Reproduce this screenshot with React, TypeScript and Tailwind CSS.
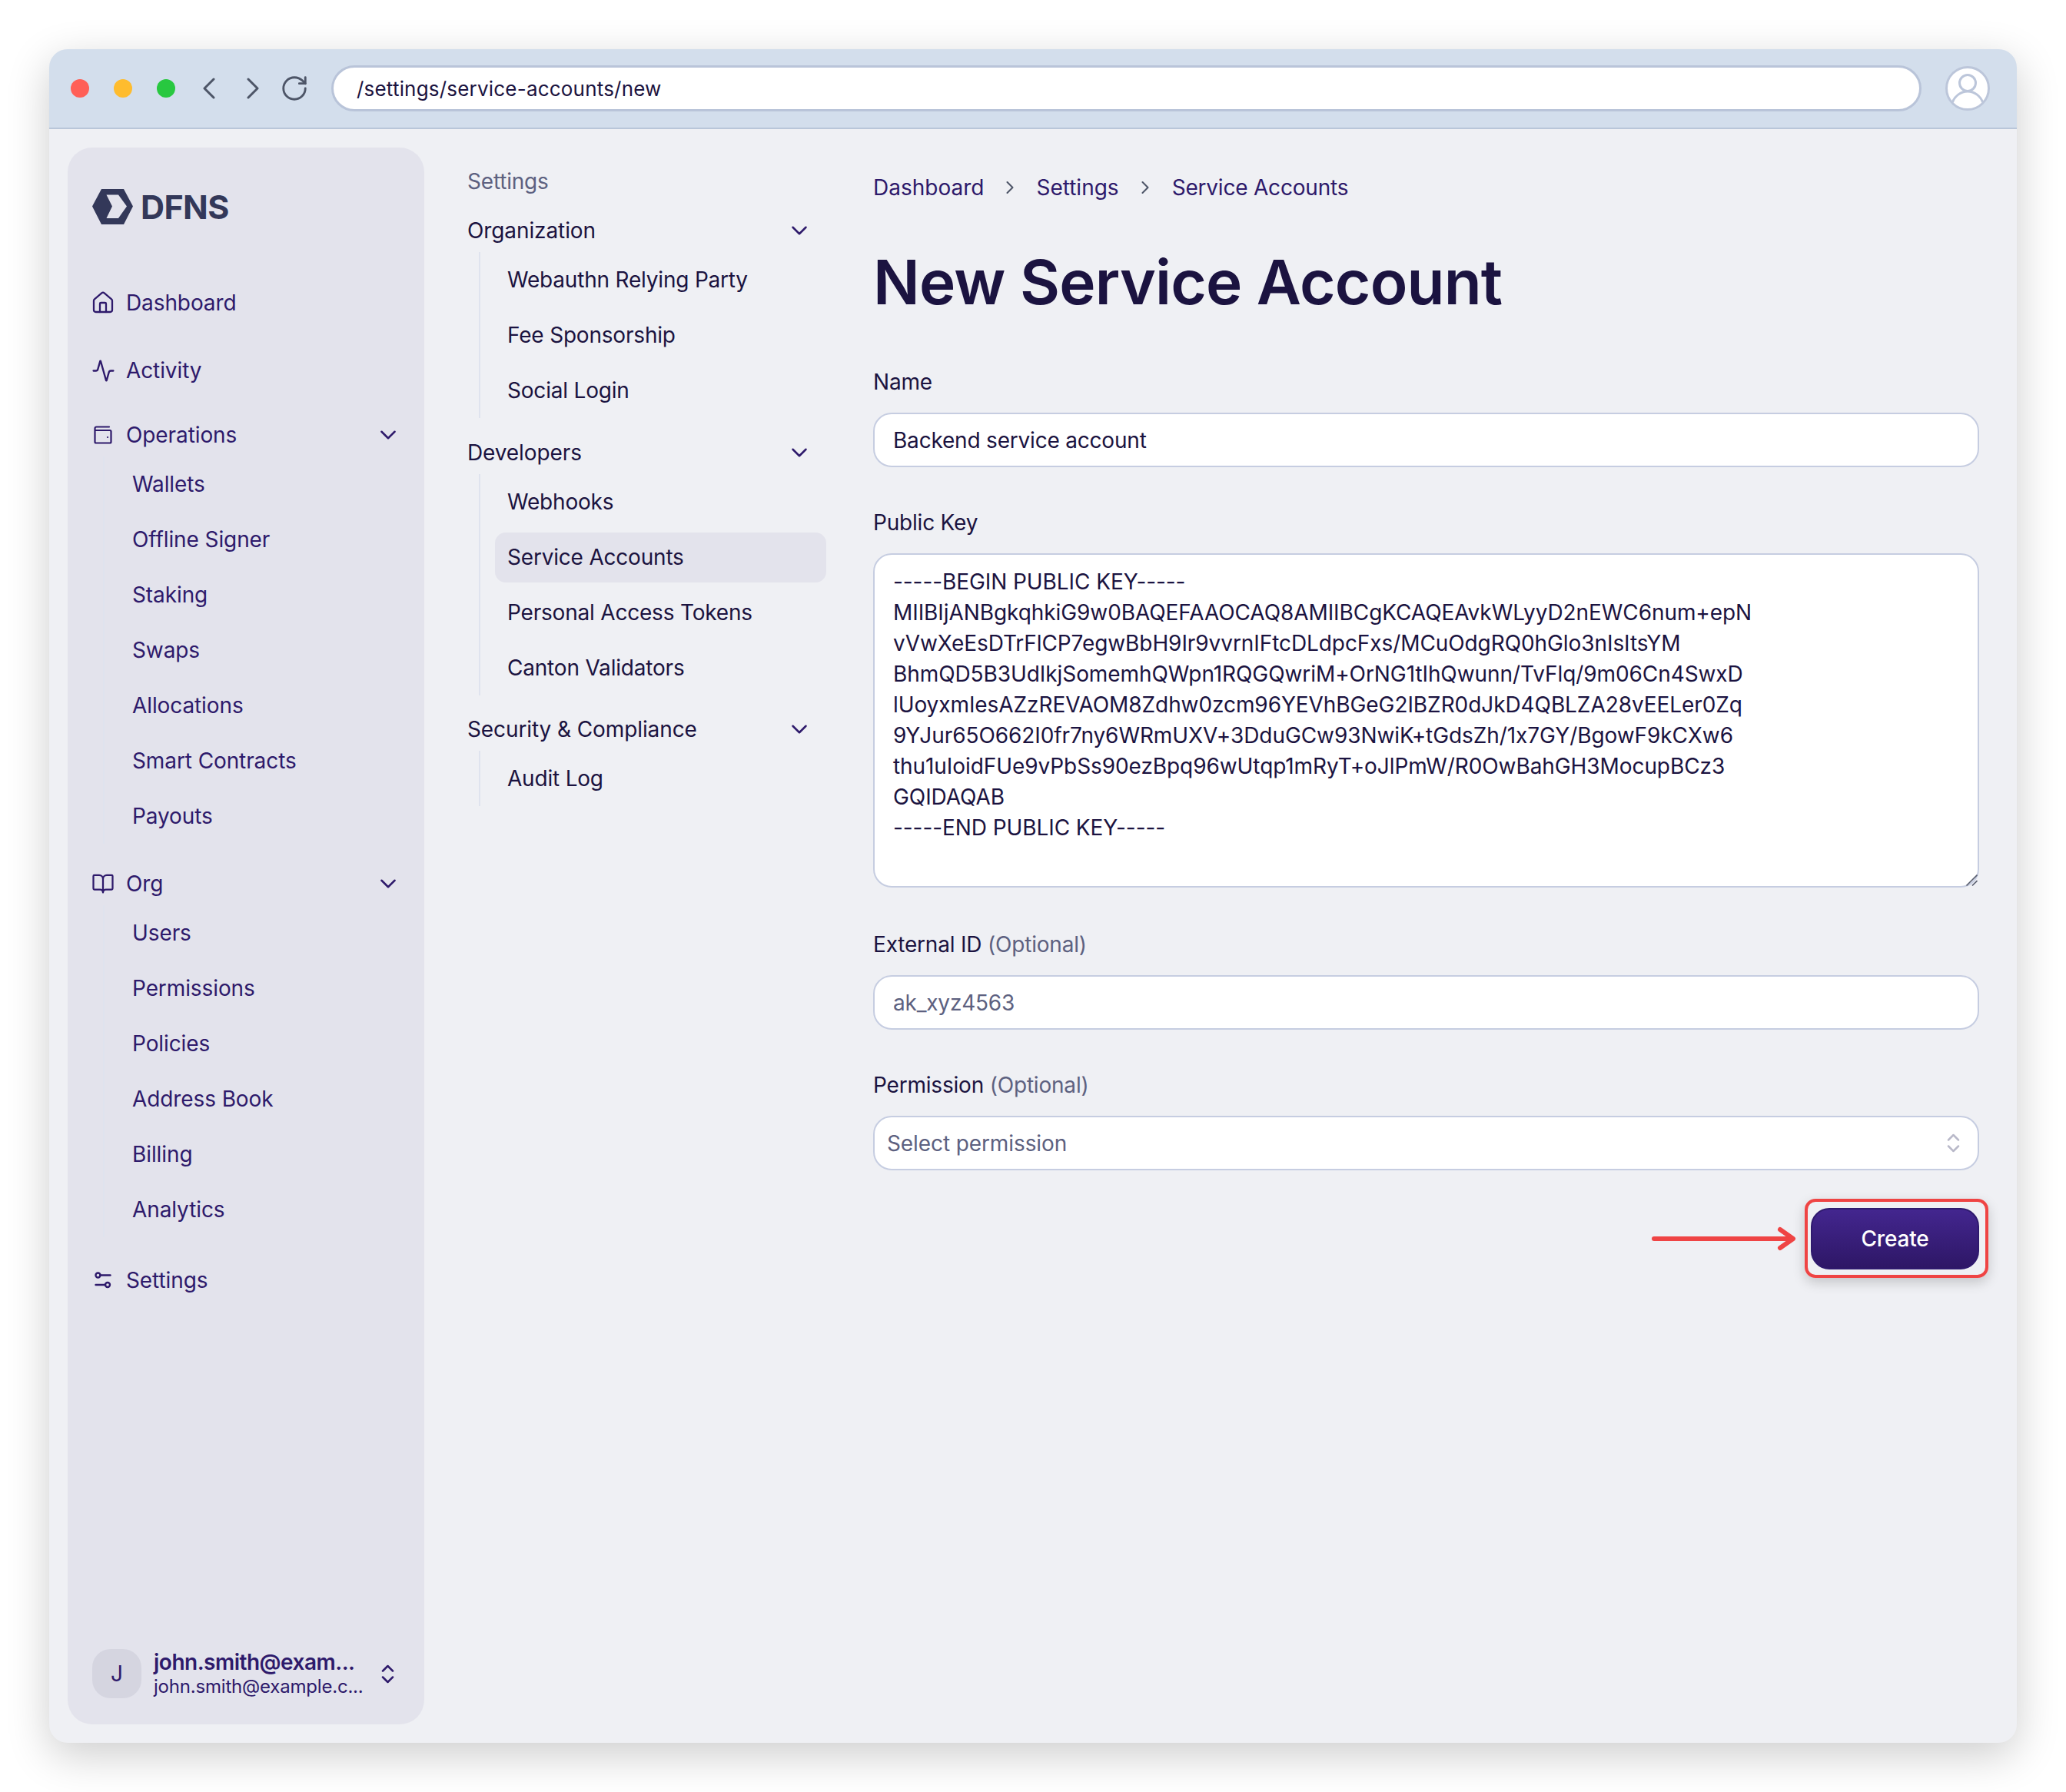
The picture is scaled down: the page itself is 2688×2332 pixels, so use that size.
import { Activity, BookOpen, ChevronDown, ChevronRight, House, RotateCw } from "lucide-react";

const publicKey = `-----BEGIN PUBLIC KEY-----
MIIBIjANBgkqhkiG9w0BAQEFAAOCAQ8AMIIBCgKCAQEAvkWLyyD2nEWC6num+epN
vVwXeEsDTrFlCP7egwBbH9Ir9vvrnIFtcDLdpcFxs/MCuOdgRQ0hGlo3nIsItsYM
BhmQD5B3UdIkjSomemhQWpn1RQGQwriM+OrNG1tIhQwunn/TvFlq/9m06Cn4SwxD
lUoyxmIesAZzREVAOM8Zdhw0zcm96YEVhBGeG2IBZR0dJkD4QBLZA28vEELer0Zq
9YJur65O662I0fr7ny6WRmUXV+3DduGCw93NwiK+tGdsZh/1x7GY/BgowF9kCXw6
thu1uIoidFUe9vPbSs90ezBpq96wUtqp1mRyT+oJlPmW/R0OwBahGH3MocupBCz3
GQIDAQAB
-----END PUBLIC KEY-----`;

function WalletIcon() {
  return (
    <svg width="24" height="24" viewBox="0 0 24 24" fill="none" stroke="currentColor" strokeWidth="2.2" strokeLinejoin="round" strokeLinecap="round" className="shrink-0">
      <path d="M20 1.500H3.500A2 2 0 0 0 1.500 3.500V21a1.500 1.500 0 0 0 1.500 1.500h18a1.500 1.500 0 0 0 1.500-1.500V7.500A1.500 1.500 0 0 0 21 6H1.500" />
      <path d="M18 15h.1" />
    </svg>
  );
}

function SlidersIcon() {
  return (
    <svg width="22" height="22" viewBox="0 0 22 22" fill="none" stroke="currentColor" strokeWidth="2.4" strokeLinecap="round" className="shrink-0">
      <circle cx="4.500" cy="4.500" r="3" />
      <path d="M7.500 4.500H20.500" />
      <circle cx="17" cy="17" r="3" />
      <path d="M1.500 17h12.500" />
    </svg>
  );
}

function UpDown({ className }: { className?: string }) {
  return (
    <svg width="17" height="25" viewBox="0 0 17 25" fill="none" stroke="currentColor" strokeWidth="2.5" strokeLinecap="round" strokeLinejoin="round" className={"shrink-0 " + (className ?? "")}>
      <path d="M2 8.500 8.500 2l6.500 6.500" />
      <path d="M2 16.500 8.500 23l6.500-6.500" />
    </svg>
  );
}

function Logo() {
  return (
    <div className="flex items-center gap-[10px] h-[46px] text-[#333859]">
      <svg width="53" height="46" viewBox="0 0 53 46" className="shrink-0">
        <path fillRule="evenodd" d="M0 22.500 12 0h29l12 22.500L41 46H12ZM18.500 7.500H34L45 22.500 34 38H18.500L26 22.500Z" fill="currentColor" />
      </svg>
      <span className="text-[43px] leading-none font-bold tracking-[-0.6px]">DFNS</span>
    </div>
  );
}

function SideHead({ icon, label, open }: { icon: React.ReactNode; label: string; open?: boolean }) {
  return (
    <div className="flex items-center h-[56px] text-[#2e1a6b]">
      <span className="w-[24px] ml-[2px] mr-[18px] flex justify-center shrink-0">{icon}</span>
      <span className="text-[28px] leading-none tracking-[-0.1px]">{label}</span>
      {open && <ChevronDown size={34} strokeWidth={1.8} className="ml-auto mr-[-2px] shrink-0" />}
    </div>
  );
}

function SideList({ items }: { items: string[] }) {
  return (
    <div className="ml-[14px] border-l-2 border-[#dfe3ee] pl-[36px]">
      {items.map((t) => (
        <div key={t} className="h-[72px] flex items-center text-[28px] leading-none tracking-[-0.1px] text-[#2e1a6b]">
          {t}
        </div>
      ))}
    </div>
  );
}

function Sidebar() {
  return (
    <aside className="w-[464px] shrink-0 bg-[#e3e3ec] rounded-[32px] flex flex-col pt-[54px] pb-[34px] px-[32px]">
      <Logo />
      <div className="mt-[74px]">
        <SideHead icon={<House size={32} strokeWidth={1.7} className="shrink-0" />} label="Dashboard" />
      </div>
      <div className="mt-[32px]">
        <SideHead icon={<Activity size={31} strokeWidth={1.8} className="shrink-0" />} label="Activity" />
      </div>
      <div className="mt-[28px]">
        <SideHead icon={<WalletIcon />} label="Operations" open />
      </div>
      <SideList items={["Wallets", "Offline Signer", "Staking", "Swaps", "Allocations", "Smart Contracts", "Payouts"]} />
      <div className="mt-[24px]">
        <SideHead icon={<BookOpen size={30} strokeWidth={1.8} className="shrink-0" />} label="Org" open />
      </div>
      <SideList items={["Users", "Permissions", "Policies", "Address Book", "Billing", "Analytics"]} />
      <div className="mt-[28px]">
        <SideHead icon={<SlidersIcon />} label="Settings" />
      </div>
      <div className="mt-auto flex items-center text-[#2e1a6b]">
        <div className="w-[64px] h-[64px] rounded-[24px] bg-[#d5d5e0] flex items-center justify-center text-[28px] shrink-0">J</div>
        <div className="ml-[16px] min-w-0 whitespace-nowrap">
          <div className="text-[28px] leading-[34px] font-semibold tracking-[-0.5px]">john.smith@exam...</div>
          <div className="text-[24px] leading-[30px]">john.smith@example.c...</div>
        </div>
        <UpDown className="ml-auto mr-[7px]" />
      </div>
    </aside>
  );
}

function SettingsGroup({ title, items, active }: { title: string; items: string[]; active?: string }) {
  return (
    <div>
      <div className="flex items-center justify-between h-[56px] text-[28px] leading-none tracking-[-0.1px] text-[#1b1340]">
        {title}
        <ChevronDown size={34} strokeWidth={1.8} className="mr-[18px] text-[#2e1a6b] shrink-0" />
      </div>
      <div className="ml-[15px] border-l-2 border-[#dfe3ee] pl-[19px]">
        {items.map((t) => (
          <div key={t} className="h-[72px] flex items-center">
            <div className={"h-[65px] w-full flex items-center px-[16px] rounded-[14px] text-[28px] leading-none tracking-[-0.2px] text-[#1b1340] " + (t === active ? "bg-[#e3e3ec]" : "")}>
              {t}
            </div>
          </div>
        ))}
      </div>
    </div>
  );
}

function SettingsNav() {
  return (
    <nav className="w-[467px] shrink-0 ml-[56px] pt-[48px]">
      <div className="h-[40px] flex items-center text-[28px] leading-none text-[#5d6180]">Settings</div>
      <div className="mt-[16px]">
        <SettingsGroup title="Organization" items={["Webauthn Relying Party", "Fee Sponsorship", "Social Login"]} />
      </div>
      <div className="mt-[17px]">
        <SettingsGroup title="Developers" items={["Webhooks", "Service Accounts", "Personal Access Tokens", "Canton Validators"]} active="Service Accounts" />
      </div>
      <div className="mt-[16px]">
        <SettingsGroup title="Security & Compliance" items={["Audit Log"]} />
      </div>
    </nav>
  );
}

function Label({ children, hint }: { children: string; hint?: string }) {
  return (
    <div className="h-[40px] flex items-center text-[28px] leading-none text-[#1b1340] whitespace-pre">
      {children}
      {hint && <span className="text-[#5d6180]"> {hint}</span>}
    </div>
  );
}

function Main() {
  return (
    <main className="flex-1 min-w-0 ml-[61px] pt-[56px]">
      <div className="h-[40px] flex items-center text-[28px] leading-none tracking-[0px] text-[#2e1a6b]">
        Dashboard
        <ChevronRight size={28} strokeWidth={1.8} className="ml-[20px] mr-[20px] text-[#4d5567] shrink-0" />
        Settings
        <ChevronRight size={28} strokeWidth={1.8} className="ml-[20px] mr-[21px] text-[#4d5567] shrink-0" />
        <span className="tracking-[-0.2px]">Service Accounts</span>
      </div>
      <h1 className="mt-[53px] h-[100px] flex items-center text-[80px] leading-none font-semibold tracking-[-0.8px] text-[#1b1340]">New Service Account</h1>

      <div className="mt-[60px]">
        <Label>Name</Label>
      </div>
      <input
        readOnly
        value="Backend service account"
        className="mt-[20px] block w-full h-[71px] rounded-[24px] border-2 border-[#c6cde1] bg-white px-[24px] text-[28px] text-[#1b1340] outline-none"
      />

      <div className="mt-[52px]">
        <Label>Public Key</Label>
      </div>
      <div className="relative mt-[20px]">
        <textarea
          readOnly
          value={publicKey}
          wrap="off"
          className="block w-full h-[435px] rounded-[24px] border-2 border-[#c6cde1] bg-white px-[24px] pt-[15px] text-[28px] leading-[40px] tracking-[-0.08px] [font-variant-ligatures:no-contextual] text-[#1b1340] outline-none overflow-hidden resize-none"
        />
        <svg width="16" height="18" viewBox="0 0 16 18" fill="none" stroke="#5a5f70" strokeWidth="1.700" className="absolute right-[2px] bottom-[1px]">
          <path d="M1.500 16.500 15.500 2.500" />
          <path d="M9 16.500 15.500 10" />
        </svg>
      </div>

      <div className="mt-[54px]">
        <Label hint="(Optional)">External ID</Label>
      </div>
      <input
        readOnly
        value="ak_xyz4563"
        className="mt-[20px] block w-full h-[71px] rounded-[24px] border-2 border-[#c6cde1] bg-white px-[24px] text-[28px] text-[#5d6180] outline-none"
      />

      <div className="mt-[52px]">
        <Label hint="(Optional)">Permission</Label>
      </div>
      <div className="mt-[20px] flex items-center justify-between h-[71px] rounded-[24px] border-2 border-[#c6cde1] bg-white pl-[16px] pr-[23px] text-[28px] leading-none tracking-[-0.1px] text-[#5d6180]">
        Select permission
        <UpDown className="text-[#b9b9c9]" />
      </div>

      <div className="mt-[49px] flex justify-end">
        <div className="relative">
          <button className="block w-[219px] h-[80px] rounded-[24px] border-2 border-[#2f1a6e] bg-gradient-to-b from-[#43268f] to-[#2e1766] text-[28px] font-medium text-white">
            Create
          </button>
          <div className="absolute -left-[8px] -right-[12px] -top-[12px] -bottom-[11px] rounded-[14px] border-[4px] border-[#ef4444] shadow-[0_6px_16px_rgba(0,0,0,0.18)]" />
          <svg width="192" height="36" viewBox="0 0 192 36" className="absolute -left-[210px] top-[22px]" fill="none" stroke="#ef4444" strokeWidth="6" strokeLinecap="round" strokeLinejoin="round">
            <path d="M6 18h179" />
            <path d="M170 6l17 12-17 12" />
          </svg>
        </div>
      </div>
    </main>
  );
}

export default function App() {
  return (
    <div className="w-[2688px] h-[2332px] bg-white pt-[64px] pl-[64px] font-['Inter',sans-serif] tracking-[-0.2px] overflow-hidden">
      <div className="w-[2560px] h-[2204px] rounded-[24px] overflow-hidden shadow-[0_16px_56px_rgba(0,0,0,0.2)] bg-[#eff0f4] flex flex-col">
        <div className="h-[104px] shrink-0 bg-[#d3deec] border-b-2 border-[#b9c6d9] flex items-center pl-[28px] pr-[35px]">
          <span className="w-[24px] h-[24px] rounded-full bg-[#ff5f57]" />
          <span className="w-[24px] h-[24px] rounded-full bg-[#febc2e] ml-[32px]" />
          <span className="w-[24px] h-[24px] rounded-full bg-[#28c840] ml-[32px]" />
          <svg width="16" height="28" viewBox="0 0 16 28" fill="none" stroke="#4d5567" strokeWidth="3" strokeLinecap="round" strokeLinejoin="round" className="ml-[36px]">
            <path d="M14 2 2 14l12 12" />
          </svg>
          <svg width="16" height="28" viewBox="0 0 16 28" fill="none" stroke="#4d5567" strokeWidth="3" strokeLinecap="round" strokeLinejoin="round" className="ml-[41px]">
            <path d="M2 2l12 12L2 26" />
          </svg>
          <RotateCw size={38} strokeWidth={1.800} className="ml-[27px] text-[#4d5567] shrink-0" />
          <div className="ml-[29px] flex-1 h-[60px] rounded-full bg-white border-[3px] border-[#b9c4d9] flex items-center pl-[30px] pt-[2px] text-[26px] leading-none tracking-[0.2px] text-[#1b1340]">
            /settings/service-accounts/new
          </div>
          <svg width="58" height="58" viewBox="0 0 58 58" fill="white" stroke="#bcc6da" strokeWidth="3" className="ml-[31px] shrink-0">
            <circle cx="29" cy="29" r="27.500" />
            <circle cx="29" cy="22" r="10.500" />
            <path d="M9 48c3-9 11-15 20-15s17 6 20 15" />
          </svg>
        </div>
        <div className="flex-1 min-h-0 flex pt-[24px] pb-[24px] pl-[24px] pr-[49px]">
          <Sidebar />
          <div className="flex flex-1 min-w-0 -mt-[24px]">
            <SettingsNav />
            <Main />
          </div>
        </div>
      </div>
    </div>
  );
}
